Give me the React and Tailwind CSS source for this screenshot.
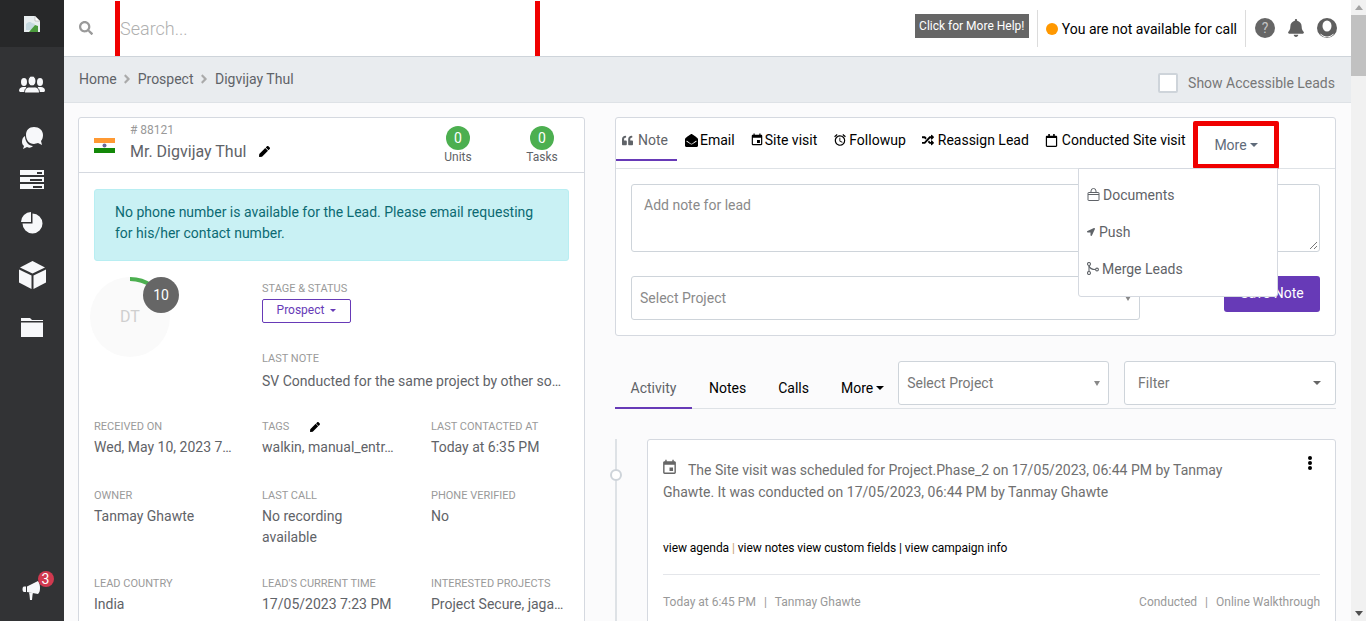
import { FaSearch, FaQuoteLeft, FaEnvelopeOpen, FaRandom, FaRegCalendar, FaBell, FaLocationArrow, FaPen, FaAngleRight } from "react-icons/fa";
import { MdEvent, MdAlarm } from "react-icons/md";

const WHITE = "#f7f8fa";
const DARK = "#323335";

function Field({ label, value }) {
  return (
    <div className="min-w-0">
      <div className="text-[11px] leading-[14px] text-[#9a9a9a] uppercase">{label}</div>
      <div className="mt-[3px] text-sm leading-[21px] text-[#5f6368]">{value}</div>
    </div>
  );
}

function Tab({ icon, label, active, className }) {
  return (
    <div className={`h-[38px] flex items-start pt-[7px] text-sm leading-[20px] ${active ? "text-[#5f6368] border-b-2 border-[#673ab7]" : "text-black"} ${className}`}>
      <span className="h-[20px] flex items-center">{icon}</span>
      <span>{label}</span>
    </div>
  );
}

function UsersIcon() {
  return (
    <svg width="26" height="18" viewBox="0 0 26 18" fill={WHITE} className="mt-[29px]">
      <ellipse cx="5" cy="6" rx="3" ry="4" />
      <path d="M0 15c0-3 2-4 4-4h3l1 5H1z" />
      <ellipse cx="21" cy="6" rx="3" ry="4" />
      <path d="M26 15c0-3-2-4-4-4h-3l-1 5h7z" />
      <ellipse cx="13" cy="5" rx="4" ry="5" stroke={DARK} strokeWidth="1" />
      <path d="M5.5 17c0-4 2-6 5-6h5c3 0 5 2 5 6z" stroke={DARK} strokeWidth="1" />
    </svg>
  );
}

function CommentsIcon() {
  return (
    <svg width="21" height="22" viewBox="0 0 21 22" fill={WHITE} className="mt-[33px]">
      <path d="M3 9c-2 1-3 3-3 6 0 2 1 3 2 4l-1 3 4-2c2 1 4 1 6-1C7 19 3 15 3 9z" />
      <path d="M12 0c5 0 9 3 9 8 0 3-1 5-2 6l1 4-4-2c-1 0-3 1-4 1-5 0-8-4-8-9s3-8 8-8z" />
    </svg>
  );
}

function ServerIcon() {
  return (
    <div className="mt-[21px] w-[24px] flex flex-col gap-[2px]">
      {["w-[5px]", "w-[12px]", "w-[9px]"].map((slot) => (
        <div key={slot} className="h-[5px] bg-[#f7f8fa] flex justify-end items-center pr-[2px]">
          <span className={`${slot} h-[2px] bg-[#323335]`} />
        </div>
      ))}
    </div>
  );
}

function PieIcon() {
  return (
    <svg width="22" height="22" viewBox="0 0 22 22" fill={WHITE} className="mt-[23px]">
      <path d="M11.500 1.500A10 10 0 1 1 1.500 11.500H11.500z" />
      <path d="M10 0v10H0A10 10 0 0 1 10 0z" />
    </svg>
  );
}

function CubeIcon() {
  return (
    <svg width="27" height="28" viewBox="0 0 27 28" fill={WHITE} className="mt-[27px]">
      <path d="M13.500 0 26 6.500 13.500 12.500 1 6.500z" />
      <path d="M0 8.500 12.500 14.500V28L0 21.500z" />
      <path d="M27 8.500 14.500 14.500V28L27 21.500z" />
    </svg>
  );
}

function FolderIcon() {
  return (
    <svg width="22" height="19" viewBox="0 0 22 19" fill={WHITE} className="mt-[29px]">
      <path d="M0 0h9l2 2h11v1H0z" />
      <path d="M0 4.500h22V19H0z" />
    </svg>
  );
}

function BullhornIcon() {
  return (
    <svg width="21" height="20" viewBox="0 0 21 20" fill={WHITE}>
      <path d="M2 6.500h2V12H2c-2 0-2-5.500 0-5.500z" />
      <path d="M5 6.500 16 1c1.500 2 2 4 2 7s-.5 4-2 6L5 12z" />
      <path d="M7 12.500h4l-.5 2.500-.5 5H8l-.5-5z" />
    </svg>
  );
}

function UserIcon() {
  return (
    <svg width="20" height="20" viewBox="0 0 20 20">
      <circle cx="10" cy="10" r="10" fill="#5f5f5f" />
      <ellipse cx="10" cy="8" rx="4.500" ry="5.500" fill="#fff" />
      <path d="M3.500 15.500c2 2 4 3 6.500 3s4.500-1 6.500-3v1c-2 2-4 2.800-6.500 2.800s-4.500-.8-6.500-2.800z" fill="#fff" />
    </svg>
  );
}

function BagIcon() {
  return (
    <svg width="13" height="13" viewBox="0 0 13 13" fill="none" stroke="#5f6368" strokeWidth="1">
      <rect x="1" y="4.500" width="11" height="8" rx="0.500" />
      <path d="M4 4.500V3a2.500 2.500 0 0 1 5 0v1.500" />
      <path d="M1 6.500h11" />
    </svg>
  );
}

function MergeIcon() {
  return (
    <svg width="12" height="13" viewBox="0 0 12 13" fill="none" stroke="#5f6368" strokeWidth="1.100">
      <circle cx="2" cy="2" r="1.500" />
      <circle cx="2" cy="11" r="1.500" />
      <path d="M2 3.500v6" />
      <path d="M2 4c1 3 4 3.500 6.500 3.500" />
      <circle cx="10" cy="7.500" r="1.400" />
    </svg>
  );
}

export default function App() {
  return (
    <div className="h-screen w-full flex overflow-hidden font-['Roboto',sans-serif] bg-[#fbfbfc]">
      <aside className="w-[64px] shrink-0 bg-[#323335] flex flex-col items-center">
        <div className="w-full h-[47px] bg-[#272829] flex justify-center pt-[16px]">
          <svg width="16" height="16" viewBox="0 0 16 16">
            <path d="M0 0h11l5 5v11H0z" fill="#e8eef0" />
            <path d="M2 8c3-3 5-2 6-1l3 1-3 6H2z" fill="#c5d9e0" />
            <path d="M5 16l6-7 3 1v6z" fill="#4a9a3c" />
            <path d="M11 0l5 5h-5z" fill="#fff" stroke="#999" strokeWidth="0.5" />
          </svg>
        </div>
        <UsersIcon />
        <CommentsIcon />
        <ServerIcon />
        <PieIcon />
        <CubeIcon />
        <FolderIcon />
        <div className="mt-auto mb-[21px] relative">
          <BullhornIcon />
          <span className="absolute -top-[9px] left-[16px] w-[16px] h-[16px] rounded-full bg-[#d0394f] text-white text-sm leading-[16px] text-center">3</span>
        </div>
      </aside>

      <div className="flex-1 min-w-0 flex flex-col">
        <header className="h-[57px] shrink-0 bg-white border-b border-[#ced4da] flex items-center pl-[15px] pr-[14px]">
          <FaSearch size={14} className="text-[#9a9a9a]" />
          <div className="ml-[22px] w-[425px] h-[55px] mt-[1px] border-x-[5px] border-[#f00000] flex items-center text-lg text-[#b0b0b0] font-light">Search...</div>
          <div className="ml-auto w-[114px] bg-[#666] text-white text-xs h-[24px] flex items-center justify-center mb-[4px]">Click for More Help!</div>
          <div className="ml-[8px] h-[37px] border-l border-[#dcdcdc] pl-[8px] pt-[2px] flex items-center text-sm text-black gap-[4px]">
            <span className="w-[12px] h-[12px] rounded-full bg-[#ff9800]" />
            You are not available for call
          </div>
          <div className="ml-[8px] h-[37px] border-l border-[#dcdcdc] pl-[9px] flex items-center gap-[12px] text-[#5f5f5f]">
            <span className="w-[20px] h-[20px] rounded-full bg-[#666] text-[#c4c4c4] text-sm leading-[20px] text-center">?</span>
            <FaBell size={18} />
            <UserIcon />
          </div>
        </header>

        <div className="h-[46px] shrink-0 bg-[#e9ecef] border-b border-[#dee2e6] flex items-center pl-[15px] pr-[16px] pb-[2px] text-sm text-[#5f6368]">
          <span>Home</span>
          <FaAngleRight size={14} className="mx-[3.5px] text-[#aaa]" />
          <span>Prospect</span>
          <FaAngleRight size={14} className="ml-[3.5px] mr-[4px] text-[#aaa]" />
          <span>Digvijay Thul</span>
          <div className="ml-auto flex items-center gap-[10px] mt-[8px] text-[#777]">
            <span className="w-[20px] h-[20px] bg-white border-2 border-[#ced4da] rounded-[2px]" />
            Show Accessible Leads
          </div>
        </div>

        <main className="flex-1 min-h-0 overflow-hidden flex items-start gap-[30px] pl-[14px] pr-[15px] pt-[14px]">
          <section className="w-[507px] shrink-0 h-[600px] bg-white border border-[#d5d9e0] rounded-[3px]">
            <div className="h-[55px] border-b border-[#d5d9e0] flex items-start pl-[15px]">
              <svg width="21" height="15" viewBox="0 0 21 15" className="mt-[20px]">
                <rect width="21" height="5" fill="#ff9933" />
                <rect y="5" width="21" height="5" fill="#fff" />
                <rect y="10" width="21" height="5" fill="#138808" />
                <circle cx="10.500" cy="7.500" r="2" fill="#6a6a9a" />
              </svg>
              <div className="ml-[15px] mt-[5px]">
                <div className="text-xs leading-[14px] text-[#999]"># 88121</div>
                <div className="mt-[5px] text-base leading-[19px] text-[#5f6368] flex items-center">
                  Mr. Digvijay Thul
                  <FaPen size={11} className="ml-[13px] text-black" />
                </div>
              </div>
              <div className="ml-auto flex pr-[22px] gap-[44px] mt-[8px]">
                {["Units", "Tasks"].map((t) => (
                  <div key={t} className="w-[40px] flex flex-col items-center text-xs text-[#5f6368]">
                    <span className="w-[24px] h-[24px] rounded-full bg-[#4caf50] text-white text-sm leading-[24px] text-center">0</span>
                    <span className="leading-[14px]">{t}</span>
                  </div>
                ))}
              </div>
            </div>

            <div className="px-[15px] pt-[16px]">
              <div className="h-[72px] bg-[#c9f1f4] border border-[#b8eef2] rounded-[3px] px-[20px] pt-[12px] text-sm leading-[21px] text-[#0c6a72]">
                No phone number is available for the Lead. Please email requesting for his/her contact number.
              </div>

              <div className="grid grid-cols-[168px_169px_138px]">
                <div className="relative h-[138px] pt-[16px]">
                  <div className="w-[80px] h-[80px] -ml-[4px] rounded-full bg-[#fafafa] flex items-center justify-center text-base text-[#cfcfcf]">DT</div>
                  <svg width="80" height="80" viewBox="0 0 80 80" className="absolute left-[-4px] top-[16px]">
                    <path d="M40 2A38 38 0 0 1 62 9" fill="none" stroke="#4caf50" strokeWidth="4" />
                  </svg>
                  <span className="absolute left-[49px] top-[16px] w-[36px] h-[36px] rounded-full bg-[#666] text-white text-sm leading-[36px] text-center">10</span>
                </div>
                <div className="col-span-2 pt-[21px]">
                  <div className="text-[11px] leading-[14px] text-[#9a9a9a] uppercase">Stage &amp; Status</div>
                  <div className="mt-[3px] w-[89px] h-[24px] pb-[2px] border border-[#673ab7] rounded-[2px] text-xs text-[#673ab7] flex items-center justify-center gap-[6px]">
                    Prospect
                    <span className="w-0 h-0 border-x-[3px] border-x-transparent border-t-[3px] border-t-[#673ab7]" />
                  </div>
                  <div className="mt-[29px]">
                    <div className="text-[11px] leading-[14px] text-[#9a9a9a] uppercase">Last note</div>
                    <div className="mt-[5px] text-sm leading-[21px] text-[#5f6368] whitespace-nowrap">SV Conducted for the same project by other so…</div>
                  </div>
                </div>
              </div>

              <div className="grid grid-cols-[168px_169px_138px] mt-[21px]">
                <div className="h-[69px]"><Field label="Received on" value="Wed, May 10, 2023 7…" /></div>
                <div className="h-[69px]">
                  <div className="text-[11px] leading-[14px] text-[#9a9a9a] uppercase flex items-center">Tags<FaPen size={10} className="ml-[21px] text-black" /></div>
                  <div className="mt-[3px] text-sm leading-[21px] text-[#5f6368]">walkin, manual_entr…</div>
                </div>
                <div className="h-[69px]"><Field label="Last contacted at" value="Today at 6:35 PM" /></div>
                <div className="h-[88px]"><Field label="Owner" value="Tanmay Ghawte" /></div>
                <div className="h-[88px] w-[133px]"><Field label="Last call" value="No recording available" /></div>
                <div className="h-[88px]"><Field label="Phone verified" value="No" /></div>
                <Field label="Lead country" value="India" />
                <Field label="Lead's current time" value="17/05/2023 7:23 PM" />
                <Field label="Interested projects" value="Project Secure, jaga…" />
              </div>
            </div>
          </section>

          <section className="flex-1 min-w-0">
            <div className="relative h-[219px] bg-white border border-[#d5d9e0] rounded-[3px]">
              <div className="h-[51px] border-b border-[#dee2e6] pt-[5px] flex">
                <Tab active className="pl-[6px] pr-[8px] gap-[5px] w-[61px]" icon={<FaQuoteLeft size={11} className="text-[#5f6368]" />} label="Note" />
                <Tab className="ml-[8px] gap-[2px]" icon={<FaEnvelopeOpen size={13} />} label="Email" />
                <Tab className="ml-[15px] gap-[1px]" icon={<MdEvent size={14} />} label="Site visit" />
                <Tab className="ml-[16px] gap-[2px]" icon={<MdAlarm size={14} />} label="Followup" />
                <Tab className="ml-[16px] gap-[4px]" icon={<FaRandom size={12} />} label="Reassign Lead" />
                <Tab className="ml-[16px] gap-[4px]" icon={<FaRegCalendar size={13} />} label="Conducted Site visit" />
              </div>
              <div className="absolute left-[577px] top-[3px] w-[86px] h-[48px] border-[5px] border-[#f00000] rounded-[2px] flex items-center justify-center gap-[3px] text-sm text-[#5f6b7a]">
                More
                <span className="w-0 h-0 border-x-[4px] border-x-transparent border-t-[4px] border-t-[#5f6b7a]" />
              </div>
              <div className="absolute left-[462px] top-[50px] z-10 w-[200px] h-[129px] bg-white border border-[#d5d9e0] rounded-b-[3px] pl-[8px] pt-[7px] text-sm text-[#5f6368]">
                <div className="h-[37px] flex items-center gap-[3px]"><BagIcon />Documents</div>
                <div className="h-[37px] flex items-center gap-[4px]"><FaLocationArrow size={8} />Push</div>
                <div className="h-[37px] flex items-center gap-[3px]"><MergeIcon />Merge Leads</div>
              </div>
              <div className="px-[15px] pt-[15px]">
                <div className="relative h-[68px] border border-[#ced4da] rounded-[3px] pl-[12px] pt-[10px] text-sm text-[#8a8a8a]">
                  Add note for lead
                  <svg width="9" height="9" viewBox="0 0 9 9" className="absolute right-[1px] bottom-[1px]" stroke="#777" fill="none">
                    <path d="M1 8 8 1M5 8l3-3" />
                  </svg>
                </div>
                <div className="mt-[24px] flex items-start justify-between">
                  <div className="w-[509px] h-[44px] border border-[#ced4da] rounded-[3px] pl-[8px] flex items-center justify-between pr-[8px] text-sm text-[#8a8a8a]">
                    Select Project
                    <span className="w-0 h-0 border-x-[3px] border-x-transparent border-t-[5px] border-t-[#888]" />
                  </div>
                  <div className="w-[96px] h-[36px] bg-[#673ab7] rounded-[3px] text-white text-sm flex items-center justify-center pb-[2px]">Save Note</div>
                </div>
              </div>
            </div>

            <div className="mt-[25px] h-[48px] border-b border-[#dee2e6] flex items-start text-sm">
              <div className="w-[77px] h-[48px] border-b-2 border-[#673ab7] text-[#5f6368] flex items-center justify-center pt-[8px]">Activity</div>
              <div className="ml-[17px] h-[48px] text-black flex items-center pt-[6px]">Notes</div>
              <div className="ml-[32px] h-[48px] text-black flex items-center pt-[6px]">Calls</div>
              <div className="ml-[32px] h-[48px] text-black flex items-center gap-[3px] pt-[6px]">
                More
                <span className="w-0 h-0 border-x-[4px] border-x-transparent border-t-[4px] border-t-black" />
              </div>
              <div className="ml-[14px] w-[211px] h-[44px] bg-white border border-[#ced4da] rounded-[3px] pl-[8px] pr-[8px] flex items-center justify-between text-[#777]">
                Select Project
                <span className="w-0 h-0 border-x-[3px] border-x-transparent border-t-[5px] border-t-[#888]" />
              </div>
              <div className="ml-[15px] w-[212px] h-[44px] bg-white border border-[#ced4da] rounded-[3px] pl-[13px] pr-[14px] flex items-center justify-between text-[#777]">
                Filter
                <span className="w-0 h-0 border-x-[4px] border-x-transparent border-t-[4px] border-t-[#666]" />
              </div>
            </div>

            <div className="mt-[30px] flex">
              <div className="relative w-[32px] shrink-0 h-[190px]">
                <div className="w-[2px] h-full bg-[#dee2e6]" />
                <span className="absolute left-[-5px] top-[30px] w-[12px] h-[12px] rounded-full bg-white border-2 border-[#ced4da]" />
              </div>
              <div className="relative flex-1 min-w-0 h-[190px] bg-white border border-[#d5d9e0] rounded-[3px] px-[15px] pt-[19px] text-sm leading-[22px] text-[#6f6f6f]">
                <MdEvent size={17} className="absolute left-[13px] top-[19px] text-[#666]" />
                <p className="indent-[25px] w-[590px]">The Site visit was scheduled for Project.Phase_2 on 17/05/2023, 06:44 PM by Tanmay Ghawte. It was conducted on 17/05/2023, 06:44 PM by Tanmay Ghawte</p>
                <span className="absolute right-[23px] top-[16px] flex flex-col gap-[1px]">
                  <i className="w-[4px] h-[4px] rounded-full bg-black" />
                  <i className="w-[4px] h-[4px] rounded-full bg-black" />
                  <i className="w-[4px] h-[4px] rounded-full bg-black" />
                </span>
                <div className="mt-[35px] leading-[21px] text-xs text-black tracking-[-0.05px]">view agenda <span className="text-[#c8a070]">|</span> view notes view custom fields | view campaign info</div>
                <div className="mt-[15px] border-t border-[#e4e6ea] pt-[17px] flex justify-between text-xs leading-[21px] text-[#999]">
                  <span className="flex gap-[8px]"><span>Today at 6:45 PM</span><span>|</span><span>Tanmay Ghawte</span></span>
                  <span className="flex gap-[8px]"><span>Conducted</span><span>|</span><span>Online Walkthrough</span></span>
                </div>
              </div>
            </div>
          </section>
        </main>
      </div>

      <div className="w-[15px] shrink-0 bg-[#f1f1f1] flex flex-col items-center">
        <span className="mt-[5px] w-0 h-0 border-x-[4px] border-x-transparent border-b-[5px] border-b-[#a3a3a3]" />
        <span className="mt-[5px] w-[15px] h-[61px] bg-[#c1c1c1]" />
        <span className="mt-auto mb-[5px] w-0 h-0 border-x-[4px] border-x-transparent border-t-[5px] border-t-[#505050]" />
      </div>
    </div>
  );
}
